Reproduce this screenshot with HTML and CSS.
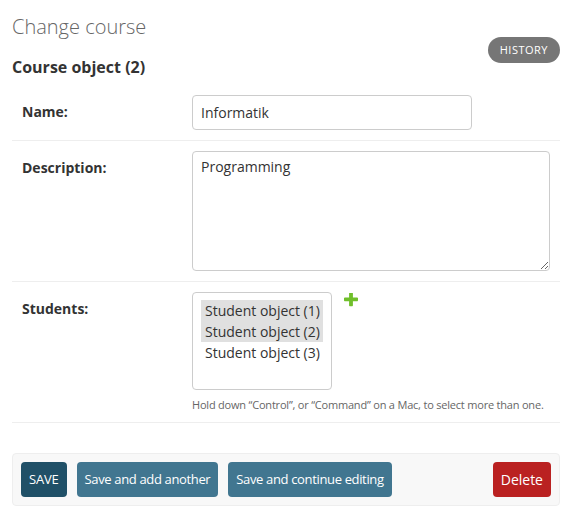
FILE: index.html
```html
<!DOCTYPE html>
<html lang="en">
<head>
<meta charset="utf-8">
<title>Change course</title>
<link rel="stylesheet" href="styles.css">
</head>
<body>
<div class="content">
  <div class="header">
    <div class="titles">
      <h1 class="title">Change course</h1>
      <h2 class="subtitle">Course object (2)</h2>
    </div>
    <ul class="object-tools">
      <li><a class="history" href="#">History</a></li>
    </ul>
  </div>
  <form class="form">
    <fieldset class="module">
      <div class="form-row">
        <label class="label" for="id_name">Name:</label>
        <input class="text-input" id="id_name" type="text" value="Informatik">
      </div>
      <div class="form-row">
        <label class="label" for="id_description">Description:</label>
        <textarea class="textarea" id="id_description">Programming</textarea>
      </div>
      <div class="form-row">
        <label class="label">Students:</label>
        <div class="field">
          <div class="widget-wrap">
            <div class="listbox">
              <div class="option selected">Student object (1)</div>
              <div class="option selected">Student object (2)</div>
              <div class="option">Student object (3)</div>
            </div>
            <a class="add-link" href="#" title="Add another student">
              <svg class="add-icon" viewBox="192 192 1408 1408" width="14" height="14"><path fill="#70bf2b" d="M1600 736v192q0 40-28 68t-68 28h-416v416q0 40-28 68t-68 28h-192q-40 0-68-28t-28-68v-416h-416q-40 0-68-28t-28-68v-192q0-40 28-68t68-28h416v-416q0-40 28-68t68-28h192q40 0 68 28t28 68v416h416q40 0 68 28t28 68z"/></svg>
            </a>
          </div>
          <div class="help">Hold down “Control”, or “Command” on a Mac, to select more than one.</div>
        </div>
      </div>
    </fieldset>
    <div class="submit-row">
      <button type="button" class="btn btn-default">Save</button>
      <button type="button" class="btn">Save and add another</button>
      <button type="button" class="btn">Save and continue editing</button>
      <a class="btn btn-delete" href="#">Delete</a>
    </div>
  </form>
</div>
</body>
</html>
```
FILE: styles.css
```css
* { box-sizing: border-box; }
html, body { margin: 0; padding: 0; background: #fff; }
body {
  font-family: "Open Sans", "DejaVu Sans", sans-serif;
  font-size: 14px;
  color: #333;
}
.content { padding: 15px 8px 0 12px; }
.header { display: flex; justify-content: space-between; align-items: flex-start; }
.title {
  margin: 0;
  font-size: 20px;
  line-height: 24px;
  font-weight: 300;
  color: #666;
}
.subtitle {
  margin: 18px 0 0;
  font-size: 16px;
  line-height: 20px;
  font-weight: 700;
  color: #333;
}
.object-tools { list-style: none; margin: 22px 0 0; padding: 0; }
.history {
  display: block;
  height: 26px;
  line-height: 26px;
  padding: 0 12px;
  border-radius: 13px;
  background: #767676;
  color: #fff;
  font-size: 11px;
  letter-spacing: 0.5px;
  text-transform: uppercase;
  text-decoration: none;
}
.form { margin-top: 8px; }
.module { margin: 0; padding: 0; border: 0; min-width: 0; }
.form-row {
  display: flex;
  align-items: flex-start;
  padding: 10px;
  border-bottom: 1px solid #eee;
}
.label {
  width: 170px;
  flex: none;
  padding: 7px 10px 0 0;
  font-weight: 700;
  line-height: 20px;
  color: #333;
}
.text-input, .textarea {
  font-family: inherit;
  font-size: 14px;
  color: #333;
  border: 1px solid #ccc;
  border-radius: 4px;
  background: #fff;
  margin: 0;
}
.text-input {
  width: 280px;
  height: 35px;
  padding: 5px 8px;
}
.textarea {
  display: block;
  width: 358px;
  height: 120px;
  padding: 4px 8px;
  line-height: 22px;
  resize: vertical;
}
.field { display: flex; flex-direction: column; }
.widget-wrap { display: flex; align-items: flex-start; }
.listbox {
  width: 140px;
  height: 98px;
  border: 1px solid #ccc;
  border-radius: 4px;
  padding: 7px 8px;
}
.option {
  line-height: 21px;
  padding: 0 4px;
  white-space: nowrap;
  color: #333;
}
.option.selected { background: #e0e0e0; }
.add-link { display: block; margin: 1px 0 0 12px; line-height: 0; }
.help {
  margin-top: 8px;
  font-size: 11px;
  line-height: 14px;
  letter-spacing: -0.2px;
  white-space: nowrap;
  color: #666;
}
.submit-row {
  display: flex;
  gap: 10px;
  margin-top: 30px;
  padding: 8px;
  border: 1px solid #eee;
  border-radius: 4px;
  background: #f8f8f8;
}
.btn {
  display: block;
  height: 35px;
  line-height: 35px;
  padding: 0 8px;
  border: 0;
  border-radius: 4px;
  background: #417690;
  color: #fff;
  font-family: inherit;
  font-size: 13px;
  letter-spacing: -0.35px;
  text-decoration: none;
  cursor: pointer;
}
.btn-default { background: #205067; text-transform: uppercase; letter-spacing: -0.2px; }
.btn-delete { background: #ba2121; margin-left: auto; font-size: 14px; letter-spacing: 0; padding: 0 8px; }
```
